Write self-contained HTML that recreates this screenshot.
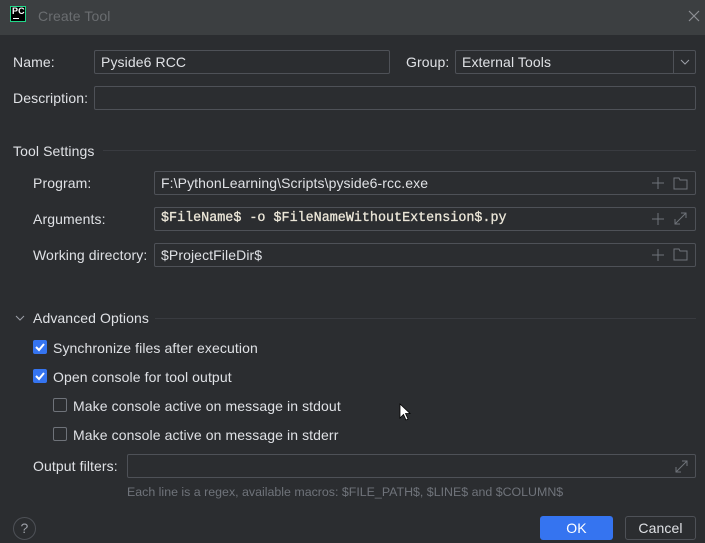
<!DOCTYPE html>
<html><head><meta charset="utf-8"><style>
*{margin:0;padding:0;box-sizing:border-box}
body{width:705px;height:543px;background:#2b2d30;font-family:"Liberation Sans",sans-serif;font-size:14px;letter-spacing:0.1px;color:#dfe1e5;position:relative;overflow:hidden}
.a{position:absolute;white-space:nowrap}
.t{line-height:16px}
.in{position:absolute;border:1px solid #4e5157;border-radius:2px;background:#2b2d30;padding-left:6px;line-height:22px;color:#dfe1e5}
.sep{position:absolute;height:1px;background:#393b40}
.cb{position:absolute;width:14px;height:14px;border-radius:2px}
.on{background:#3574f0}
.off{border:1px solid #6f737a}
</style></head><body>
<div class="a" style="left:0;top:0;width:705px;height:35px;background:#3c3f41"></div>
<div class="a" style="left:10px;top:6px;width:16px;height:16px;border:1px solid #21d789;background:#000"></div>
<div class="a" style="left:12px;top:6px;font-size:9px;font-weight:bold;color:#fff">PC</div>
<div class="a" style="left:13px;top:18px;width:6px;height:1px;background:#fff"></div>
<div class="a t" style="left:38px;top:8px;color:#6a6d70">Create Tool</div>
<svg class="a" style="left:688px;top:10px" width="12" height="12"><path d="M1 1L11 11M11 1L1 11" stroke="#8c8f94" stroke-width="1.2"/></svg>

<div class="a t" style="left:13px;top:54px">Name:</div>
<div class="in" style="left:94px;top:50px;width:296px;height:24px">Pyside6 RCC</div>
<div class="a t" style="left:406px;top:54px">Group:</div>
<div class="in" style="left:455px;top:50px;width:241px;height:24px">External Tools</div>
<div class="a" style="left:673px;top:51px;width:1px;height:22px;background:#4e5157"></div>
<svg class="a" style="left:680px;top:58px" width="10" height="8"><path d="M1 2L5 6L9 2" stroke="#9da0a8" fill="none"/></svg>
<div class="a t" style="left:13px;top:90px">Description:</div>
<div class="in" style="left:94px;top:86px;width:602px;height:24px"></div>

<div class="a t" style="left:13px;top:143px">Tool Settings</div>
<div class="sep" style="left:103px;top:150px;width:593px"></div>

<div class="a t" style="left:33px;top:175px">Program:</div>
<div class="in" style="left:154px;top:171px;width:542px;height:24px">F:\PythonLearning\Scripts\pyside6-rcc.exe</div>
<div class="a t" style="left:33px;top:211px">Arguments:</div>
<div class="in" style="left:154px;top:207px;width:542px;height:24px;font-family:'Liberation Mono',monospace;font-size:13.4px;letter-spacing:0;color:#ebe6d8;-webkit-text-stroke:0.3px #ebe6d8">$FileName$ -o $FileNameWithoutExtension$.py</div>
<div class="a t" style="left:33px;top:247px">Working directory:</div>
<div class="in" style="left:154px;top:243px;width:542px;height:24px">$ProjectFileDir$</div>

<svg class="a" style="left:650px;top:175px" width="40" height="90">
<g stroke="#6f737a" fill="none" stroke-width="1">
<path d="M8 2V14M2 8H14"/><path d="M24 3h5l1 2h7v9h-13z"/>
<path d="M8 38V50M2 44H14"/><path d="M25 49L36 38M31 38h5v5M25 44v5h5"/>
<path d="M8 74V86M2 80H14"/><path d="M24 74h5l1 2h7v9h-13z"/>
</g></svg>

<svg class="a" style="left:15px;top:314px" width="10" height="8"><path d="M1 2L5 6L9 2" stroke="#9da0a8" fill="none"/></svg>
<div class="a t" style="left:33px;top:310px">Advanced Options</div>
<div class="sep" style="left:155px;top:318px;width:541px"></div>

<div class="cb on" style="left:33px;top:340px"></div>
<svg class="a" style="left:33px;top:340px" width="14" height="14"><path d="M3 7L6 10L11 4" stroke="#fff" stroke-width="2" fill="none"/></svg>
<div class="a t" style="left:53px;top:340px">Synchronize files after execution</div>
<div class="cb on" style="left:33px;top:369px"></div>
<svg class="a" style="left:33px;top:369px" width="14" height="14"><path d="M3 7L6 10L11 4" stroke="#fff" stroke-width="2" fill="none"/></svg>
<div class="a t" style="left:53px;top:369px">Open console for tool output</div>
<div class="cb off" style="left:53px;top:398px"></div>
<div class="a t" style="left:73px;top:398px">Make console active on message in stdout</div>
<div class="cb off" style="left:53px;top:427px"></div>
<div class="a t" style="left:73px;top:427px">Make console active on message in stderr</div>

<svg class="a" style="left:399px;top:403px" width="12" height="18"><path d="M1 1V15L4.5 11.5L7 17L9 16L6.5 10.5H11Z" fill="#fff" stroke="#000" stroke-width="0.8"/></svg>

<div class="a t" style="left:33px;top:458px">Output filters:</div>
<div class="in" style="left:127px;top:454px;width:569px;height:24px"></div>
<svg class="a" style="left:673px;top:458px" width="16" height="16"><path d="M3 14L14 3M9 3h5v5M3 9v5h5" stroke="#6f737a" fill="none"/></svg>
<div class="a" style="left:127px;top:485px;font-size:12.4px;letter-spacing:0;color:#6f737a">Each line is a regex, available macros: $FILE_PATH$, $LINE$ and $COLUMN$</div>

<div class="a" style="left:13px;top:517px;width:23px;height:23px;border:1px solid #4e5157;border-radius:50%;text-align:center;line-height:21px;color:#9da0a8;font-size:14px">?</div>
<div class="a" style="left:540px;top:516px;width:73px;height:24px;background:#3574f0;border-radius:3px;color:#fff;text-align:center;line-height:24px">OK</div>
<div class="a" style="left:625px;top:516px;width:71px;height:24px;border:1px solid #4e5157;border-radius:3px;text-align:center;line-height:22px">Cancel</div>
</body></html>
